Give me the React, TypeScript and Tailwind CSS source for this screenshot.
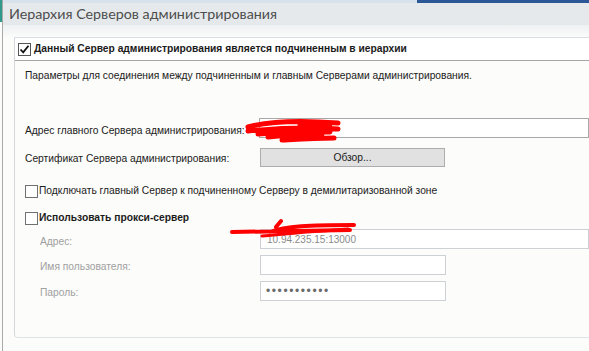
import React from 'react';

const font = { fontFamily: '"Liberation Sans", Arial, sans-serif' };

const Box = ({ checked = false, dark = false }: { checked?: boolean; dark?: boolean }) => (
  <span
    className={`flex h-[13px] w-[13px] shrink-0 items-center justify-center border bg-white ${
      dark ? 'border-[#555]' : 'border-[#707070]'
    }`}
  >
    {checked && (
      <svg width="11" height="11" viewBox="0 0 11 11">
        <path d="M1.5 5.5 L4.2 8.3 L9.5 1.8" fill="none" stroke="#111" strokeWidth="1.8" />
      </svg>
    )}
  </span>
);

const App = () => {
  return (
    <div
      className="relative flex h-[351px] w-[589px] overflow-hidden whitespace-nowrap bg-[#fcfcfa] text-[10.25px] text-[#1b1b1b]"
      style={font}
    >
      {/* left edge */}
      <div className="flex w-[3px] shrink-0 flex-col border-r border-[#a9a9a9]">
        <div className="h-[22px] bg-[#2f9a8c]" />
      </div>

      <div className="flex min-w-0 flex-1 flex-col">
        {/* Header */}
        <div className="flex h-[3px] bg-[#d7e2ec]">
          <div className="flex-1" />
          <div className="w-[172px] bg-[#2b5797]" />
        </div>
        <div className="flex h-[22px] items-center bg-[#e5e9ec] pl-[6px]">
          <span className="text-[14.3px] leading-none text-[#4d4d4d]" style={{ fontFamily: 'Lato, "Liberation Sans", sans-serif' }}>
            Иерархия Серверов администрирования
          </span>
        </div>
        <div className="h-[12px] bg-gradient-to-b from-[#eef1f3] to-[#fafbfa]" />

        {/* Panel */}
        <div className="ml-[11px] flex h-[301px] flex-col rounded-bl-[4px] border-t border-b border-l border-t-[#d9e0e6] border-b-[#dce3e9] border-l-[#d4d8dc] bg-[#fcfcfa]">
          <div className="flex h-[23px] shrink-0 items-center gap-[3px] border-b border-[#a6a6a6] bg-white pl-[3px]">
            <Box checked dark />
            <span className="font-bold">Данный Сервер администрирования является подчиненным в иерархии</span>
          </div>

          <div className="flex flex-col pl-[10px]">
            <div className="mt-[8px] leading-[14px]">
              Параметры для соединения между подчиненным и главным Серверами администрирования.
            </div>

            <div className="mt-[35px] flex h-[20px] items-center">
              <span className="mt-[6px] w-[234px] shrink-0">Адрес главного Сервера администрирования:</span>
              <div className="h-[20px] flex-1 border border-[#a8a8a8] bg-white" />
            </div>

            <div className="mt-[10px] flex h-[19px] items-center">
              <span className="mt-[2px] w-[235px] shrink-0">Сертификат Сервера администрирования:</span>
              <div className="flex h-[19px] w-[185px] items-center justify-center border border-[#adadad] bg-[#e1e1e1]">
                Обзор...
              </div>
            </div>

            <div className="mt-[14px] flex h-[20px] items-center gap-[1px]">
              <Box />
              <span>Подключать главный Сервер к подчиненному Серверу в демилитаризованной зоне</span>
            </div>

            <div className="mt-[7px] flex h-[20px] items-center gap-[1px]">
              <Box />
              <span className="font-bold">Использовать прокси-сервер</span>
            </div>

            <div className="mt-[1px] flex flex-col gap-[6px] pl-[15px] text-[#a0a0a0]">
              <div className="flex h-[20px] items-center">
                <span className="mt-[6px] w-[220px] shrink-0">Адрес:</span>
                <div className="flex h-[20px] flex-1 items-center border border-[#cdd1d5] bg-white pl-[6px] text-[10px] text-[#8a8a8a]">
                  10.94.235.15:13000
                </div>
              </div>
              <div className="flex h-[20px] items-center">
                <span className="mt-[4px] w-[220px] shrink-0">Имя пользователя:</span>
                <div className="h-[20px] w-[186px] border border-[#cdd1d5] bg-white" />
              </div>
              <div className="flex h-[20px] items-center">
                <span className="mt-[4px] w-[220px] shrink-0">Пароль:</span>
                <div className="flex h-[20px] w-[186px] items-center border border-[#cdd1d5] bg-white pl-[5px] text-[12px] tracking-[1.6px] text-[#6b6b6b]">
                  •••••••••••
                </div>
              </div>
            </div>
          </div>
        </div>
      </div>

      {/* redaction marks */}
      <svg className="pointer-events-none absolute left-0 top-0" width="589" height="351">
        <g fill="none" stroke="#ff0000" strokeLinecap="round" strokeLinejoin="round">
          <path d="M248 127 C270 121 300 120 338 123 M248 131 C280 128 310 127 338 129 M258 134 C285 132 300 131 330 132 M268 137 C285 135 300 134 322 134 M282 140 C300 139 315 138 334 138 M300 125 L330 127" strokeWidth="5" />
          <path d="M232 232 L350 230 M270 232 C285 226 310 225 354 225 M276 227 L281 221" strokeWidth="4" />
          <path d="M262 236 C290 233 320 231 348 229" strokeWidth="3" />
        </g>
      </svg>
    </div>
  );
};

export default App;
